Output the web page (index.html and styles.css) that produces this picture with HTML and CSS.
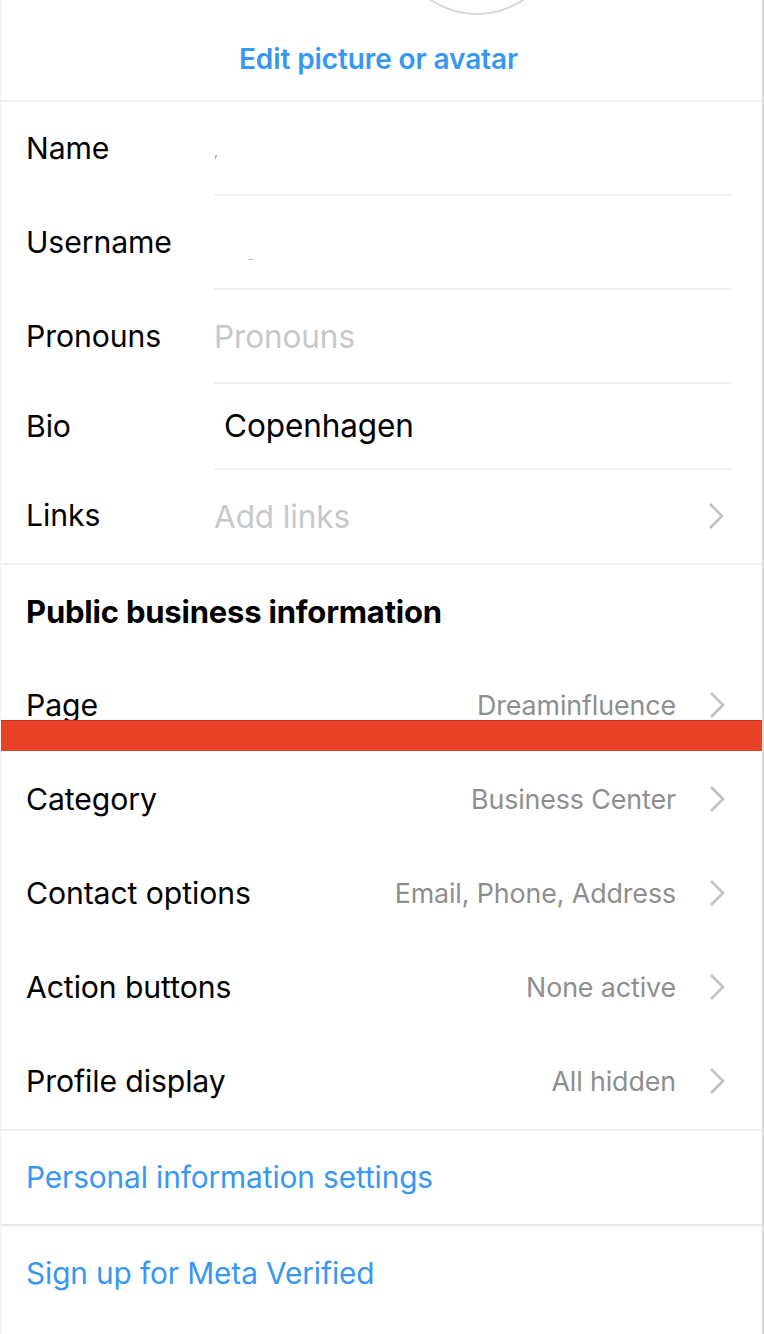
FILE: index.html
```html
<!DOCTYPE html>
<html lang="en">
<head>
<meta charset="utf-8">
<title>Edit profile</title>
<link rel="stylesheet" href="styles.css">
</head>
<body>
<div class="screen">
  <div class="avatar-area">
    <div class="avatar"></div>
    <div class="edit-link">Edit picture or avatar</div>
  </div>

  <div class="fields">
    <div class="field">
      <div class="label">Name</div>
      <div class="input"><span class="dot">,</span></div>
    </div>
    <div class="field">
      <div class="label">Username</div>
      <div class="input"><span class="dash">-</span></div>
    </div>
    <div class="field">
      <div class="label">Pronouns</div>
      <div class="input placeholder">Pronouns</div>
    </div>
    <div class="field bio">
      <div class="label">Bio</div>
      <div class="input bio-text">Copenhagen</div>
    </div>
    <div class="field last">
      <div class="label">Links</div>
      <div class="input placeholder">Add links
        <svg class="chev" viewBox="0 0 16 28" aria-hidden="true"><path d="M2 2 L14 14 L2 26"/></svg>
      </div>
    </div>
  </div>

  <div class="section">
    <div class="section-title">Public business information</div>
    <div class="row page-row">
      <div class="row-label">Page</div>
      <div class="row-value">Dreaminfluence</div>
      <svg class="chev" viewBox="0 0 16 28" aria-hidden="true"><path d="M2 2 L14 14 L2 26"/></svg>
      <div class="redact"></div>
    </div>
    <div class="row">
      <div class="row-label">Category</div>
      <div class="row-value">Business Center</div>
      <svg class="chev" viewBox="0 0 16 28" aria-hidden="true"><path d="M2 2 L14 14 L2 26"/></svg>
    </div>
    <div class="row">
      <div class="row-label">Contact options</div>
      <div class="row-value">Email, Phone, Address</div>
      <svg class="chev" viewBox="0 0 16 28" aria-hidden="true"><path d="M2 2 L14 14 L2 26"/></svg>
    </div>
    <div class="row">
      <div class="row-label">Action buttons</div>
      <div class="row-value">None active</div>
      <svg class="chev" viewBox="0 0 16 28" aria-hidden="true"><path d="M2 2 L14 14 L2 26"/></svg>
    </div>
    <div class="row">
      <div class="row-label">Profile display</div>
      <div class="row-value">All hidden</div>
      <svg class="chev" viewBox="0 0 16 28" aria-hidden="true"><path d="M2 2 L14 14 L2 26"/></svg>
    </div>
  </div>

  <div class="link-row bordered">Personal information settings</div>
  <div class="link-row">Sign up for Meta Verified</div>
</div>
</body>
</html>
```
FILE: styles.css
```css
* { box-sizing: border-box; }
html, body { margin: 0; padding: 0; background: #fff; }
body {
  font-family: Inter, "Noto Sans", "Liberation Sans", sans-serif;
  color: #000;
  overflow: hidden;
}
.screen {
  width: 764px;
  min-height: 1334px;
  border-left: 1px solid #f2f2f2;
  border-right: 2px solid #dcdcdc;
  overflow: hidden;
}
.avatar-area {
  height: 102px;
  border-bottom: 2px solid #efefef;
  display: flex;
  flex-direction: column;
}
.avatar {
  width: 168px;
  height: 168px;
  border-radius: 50%;
  border: 2px solid #d6d6d6;
  margin-top: -153px;
  margin-left: 392px;
  flex: none;
}
.edit-link {
  margin-top: 27px;
  padding-right: 6px;
  text-align: center;
  color: #3897f0;
  font-size: 28px;
  font-weight: 600;
  line-height: 34px;
  letter-spacing: -0.1px;
}
.fields { border-bottom: 2px solid #efefef; }
.field {
  display: flex;
  align-items: stretch;
  height: 94px;
  padding-left: 25px;
}
.field.bio { height: 86px; }
.field.last { height: 93px; }
.label {
  width: 188px;
  flex: none;
  display: flex;
  align-items: center;
  padding-bottom: 3px;
  font-size: 30.2px;
  letter-spacing: -0.1px;
}
.input {
  flex: none;
  width: 518px;
  display: flex;
  align-items: center;
  border-bottom: 2px solid #efefef;
  font-size: 31.5px;
  letter-spacing: -0.1px;
  position: relative;
}
.field.last .input { border-bottom: none; }
.placeholder { color: #c7c7cc; }
.bio-text { padding-left: 10px; padding-bottom: 2px; }
.dot { color: #999; font-size: 14px; margin-top: 4px; }
.dash { color: #bbb; font-size: 12px; margin-left: 34px; margin-top: 32px; }
.chev {
  width: 16px;
  height: 28px;
  flex: none;
  fill: none;
  stroke: #c2c2c6;
  stroke-width: 2.6;
}
.input .chev { position: absolute; right: 8px; top: 32px; }

.section { border-bottom: 2px solid #efefef; }
.section-title {
  height: 94px;
  padding-left: 25px;
  padding-bottom: 2px;
  display: flex;
  align-items: center;
  font-size: 31px;
  font-weight: 700;
  letter-spacing: -0.2px;
}
.row {
  height: 94px;
  display: flex;
  align-items: center;
  padding-left: 25px;
  padding-right: 37px;
  padding-bottom: 2px;
}
.row-label {
  flex: 1;
  font-size: 30.2px;
  letter-spacing: -0.1px;
}
.row-value {
  color: #8e8e8e;
  font-size: 26.8px;
  margin-right: 33px;
  letter-spacing: -0.1px;
}
.page-row { position: relative; }
.redact {
  position: absolute;
  left: -1px;
  right: 0;
  top: 61px;
  height: 31px;
  background: #e84126;
  border-top: 1px solid #c9301d;
}
.link-row {
  height: 95px;
  display: flex;
  align-items: center;
  padding-left: 25px;
  padding-bottom: 2px;
  color: #3897f0;
  font-size: 29.8px;
  letter-spacing: -0.1px;
}
.link-row.bordered { border-bottom: 2px solid #e6e6e6; }
```
